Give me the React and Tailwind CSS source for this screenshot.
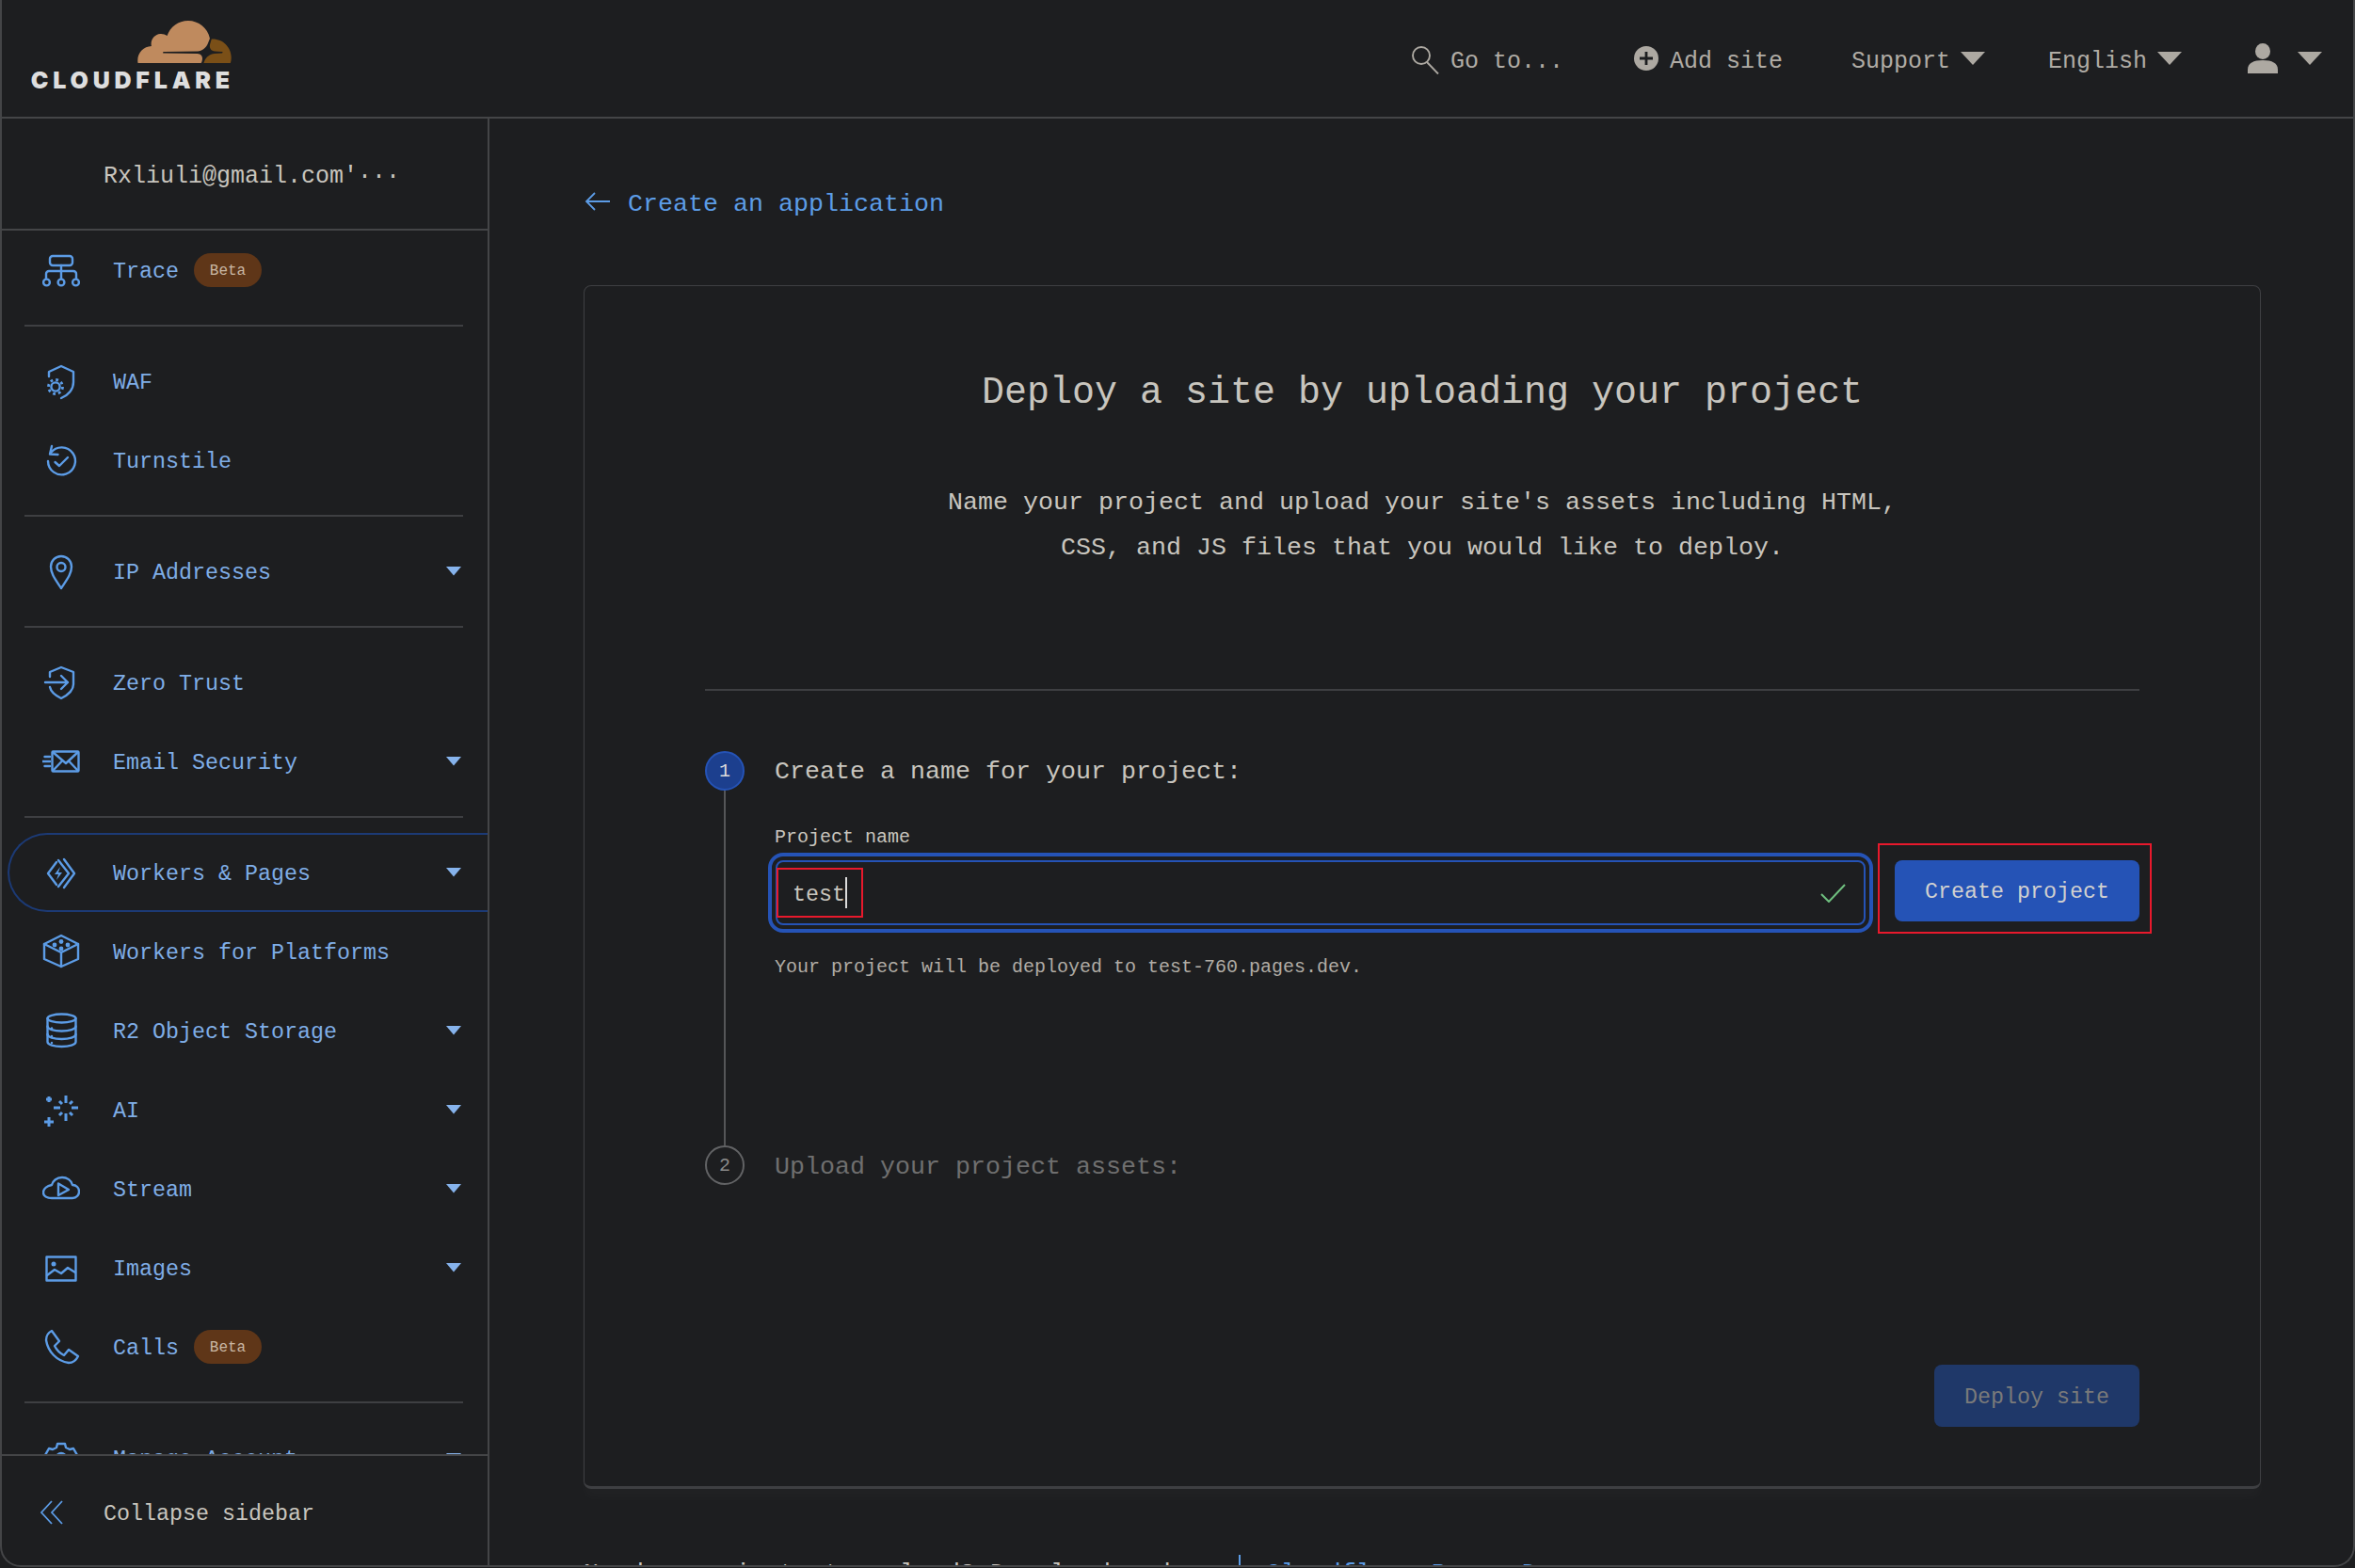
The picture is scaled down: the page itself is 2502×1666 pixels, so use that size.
import React from "react";

const S = ({ children, size = 40 }) => (
  <svg width={size} height={size} viewBox="0 0 40 40" fill="none" stroke="#5c9ce6" strokeWidth="2.4" strokeLinecap="round" strokeLinejoin="round" className="flex-none">
    {children}
  </svg>
);

const Trace = () => (
  <S>
    <rect x="8" y="5" width="24" height="10" rx="3" />
    <path d="M20 15v14M4 29v-5a3 3 0 0 1 3-3h26a3 3 0 0 1 3 3v5" />
    <circle cx="4.5" cy="33" r="3.4" />
    <circle cx="20" cy="33" r="3.4" />
    <circle cx="35.5" cy="33" r="3.4" />
  </S>
);
const Waf = () => (
  <S>
    <path d="M7 15V10L20 4l13 6v11c0 8-6 14-13 17" />
    <circle cx="14" cy="26" r="4.600" />
    <circle cx="14" cy="26" r="7.500" strokeWidth="2.800" strokeDasharray="2.800 3.090" strokeLinecap="butt" />
  </S>
);
const Turnstile = () => (
  <S>
    <path d="M9 12a14.5 14.5 0 1 1-3 9" />
    <path d="M10 5 8 13.5l8.500 .5" />
    <path d="m13.500 22 4.500 4 9-9" />
  </S>
);
const Pin = () => (
  <S>
    <path d="M20 38C14 29 9 23 9 15a11 11 0 0 1 22 0c0 8-5 14-11 23Z" />
    <circle cx="20" cy="15.500" r="4.500" />
  </S>
);
const ZeroTrust = () => (
  <S>
    <path d="M8 14V9l12-5 13 5v13c0 7-7 12-13 15-5-2.500-11-7-12-12" />
    <path d="M3 20h24M20 13l7 7-7 7" />
  </S>
);
const Email = () => (
  <S>
    <rect x="10.500" y="9.500" width="28" height="21" rx="1" />
    <path d="m11 10 14 12 13-12M11 30l9.500-10M38 30l-9.500-10" />
    <path d="M2.500 15H8M.500 20H8M2.500 25H8" />
  </S>
);
const Workers = () => (
  <S>
    <path d="M15 9 6 21l9 12" />
    <path d="m17 7 11 14-11 14" />
    <path d="m23 6 11 15-11 15" />
    <path d="M19 14l-6 8h4l-2 6 6-8h-4Z" fill="#5c9ce6" stroke="none" />
  </S>
);
const Platforms = () => (
  <S>
    <path d="m20 3 18 9v16l-18 8-18-8V12Z" />
    <path d="m2 12 18 9 18-9M20 21v15" />
    <g fill="#5c9ce6" stroke="none">
      <circle cx="13" cy="13" r="2.400" />
      <circle cx="20" cy="9.500" r="2.400" />
      <circle cx="27" cy="13" r="2.400" />
      <circle cx="20" cy="17" r="2.400" />
    </g>
  </S>
);
const R2 = () => (
  <S>
    <ellipse cx="20.500" cy="7" rx="15" ry="4.500" />
    <path d="M5.500 7v25c0 3 7 5 15 5s15-2 15-5V7" />
    <path d="M5.500 15.500c0 3 7 5 15 5s15-2 15-5M5.500 24c0 3 7 5 15 5s15-2 15-5" />
    <g fill="#5c9ce6" stroke="none">
      <circle cx="10" cy="17.500" r="1.200" />
      <circle cx="10" cy="26" r="1.200" />
      <circle cx="10" cy="33" r="1.200" />
    </g>
  </S>
);
const Ai = () => (
  <S>
    <g strokeWidth="3" strokeLinecap="butt">
      <path d="M25 5v8M25 24v8M12 18h7M31 18h7M18 11l3 3M32 11l-3 3M18 26l3-3M32 26l-3-3" />
      <path d="M4 9h6M7 6v6M2 33h10M7 28v10" />
    </g>
  </S>
);
const Stream = () => (
  <S>
    <path d="M10 30h22c4.500 0 7-3.500 7-7 0-4-3-7-7-7-1-5-6-8-11-8-6 0-10 4-11 8-5 1-9 4-9 8s4 6 9 6Z" />
    <path d="M17 14.500 28 21l-11 6Z" />
  </S>
);
const Images = () => (
  <S>
    <rect x="4.500" y="8.500" width="31" height="25" />
    <circle cx="12" cy="16" r="2.500" fill="#5c9ce6" stroke="none" />
    <path d="m5 28 8-6 7 4 7-6 8 5" />
  </S>
);
const Calls = () => (
  <S>
    <path d="m10 3 8 11-5 5c2 4 6 8 10 10l5-6 10 7c-2 4-6 7-10 7C15 35 6 25 4 13c0-4 2-8 6-10Z" />
  </S>
);
const Gear = () => (
  <S>
    <path d="M16 5h8l1 4 4 2 4-1 4 7-3 3v4l3 3-4 7-4-1-4 2-1 4h-8l-1-4-4-2-4 1-4-7 3-3v-4l-3-3 4-7 4 1 4-2Z" />
    <circle cx="20" cy="20" r="5" />
  </S>
);

const Caret = () => (
  <svg width="16" height="10" viewBox="0 0 16 10" className="flex-none">
    <path d="M0 0h16L8 9.500Z" fill="#86b3ec" />
  </svg>
);
const HeadCaret = () => (
  <svg width="26" height="14" viewBox="0 0 26 14" className="block flex-none">
    <path d="M0 0h26L13 14Z" fill="#ada9a2" />
  </svg>
);

const Beta = () => (
  <span className="ml-[16px] flex h-[36px] w-[72px] items-center justify-center rounded-full bg-[#5f3618] pt-[2px] text-[16px] text-[#c9b7a3]">
    Beta
  </span>
);

const Row = ({ icon: I, label, caret, beta, active }) => (
  <div
    className={
      "ml-[6px] flex h-[84px] flex-none items-center rounded-l-full border-2 border-r-0 pl-[35px] pr-[28px] " +
      (active ? "border-[#1c3a75]" : "border-transparent")
    }
  >
    <I />
    <span className="ml-[35px] pt-[5px] text-[23.33px] text-[#7fade6]">{label}</span>
    {beta && <Beta />}
    {caret && (
      <span className="ml-auto">
        <Caret />
      </span>
    )}
  </div>
);

const Divider = () => <div className="my-[16px] ml-[24px] h-[2px] w-[466px] flex-none bg-[#3e3f42]" />;

export default function App() {
  return (
    <div className="h-[1666px] w-[2502px] overflow-hidden bg-[#1d1e20] [font-family:'Liberation_Mono',monospace]">
      <div className="flex h-[1665px] flex-col overflow-hidden rounded-b-[22px] border-x-2 border-b-2 border-[#444547]">
        <header className="flex h-[126px] flex-none items-start border-b-2 border-[#444547] pl-[32px] pr-[33px]">
          <div className="mt-[22px] flex w-[212px] flex-col items-end">
            <svg width="100" height="45" viewBox="0 6.570 24 10.860" className="block">
              <path
                fill="#bf8a5e"
                d="M16.5088 16.8447c.1475-.5068.0908-.9707-.1553-1.3154-.2246-.3164-.6045-.499-1.0615-.5205l-8.6592-.1123a.1559.1559 0 0 1-.1333-.0713c-.0283-.042-.0351-.0986-.021-.1553.0278-.084.1123-.1484.2036-.1562l8.7359-.1123c1.0351-.0489 2.1601-.8868 2.5537-1.9136l.499-1.3013c.0215-.0561.0293-.1128.0147-.168-.5625-2.5463-2.835-4.4453-5.5499-4.4453-2.5039 0-4.6284 1.6177-5.3876 3.8614-.4927-.3658-1.1187-.5625-1.794-.499-1.2026.119-2.1665 1.083-2.2861 2.2856-.0283.31-.0069.6128.0635.894C1.5683 13.171 0 14.7754 0 16.752c0 .1748.0142.3515.0352.5273.0141.083.0844.1475.1689.1475h15.9814c.0909 0 .1758-.0645.2032-.1553l.12-.4268z"
              />
              <path
                fill="#7a4f17"
                d="M19.2656 11.2813c-.0771 0-.1611 0-.2383.0112-.0566 0-.1054.0415-.127.0976l-.3378 1.1744c-.1475.5068-.0918.9707.1543 1.3164.2256.3164.6055.498 1.0625.5195l1.8437.1133c.0557 0 .1055.0263.1329.0703.0283.043.0351.1074.0214.1562-.0283.084-.1132.1485-.204.1553l-1.921.1123c-1.041.0488-2.1582.8867-2.5527 1.914l-.1406.3585c-.0283.0713.0215.1416.0986.1416h6.5977c.0771 0 .1474-.0489.169-.126.1122-.4082.1757-.837.1757-1.2803 0-2.6025-2.125-4.727-4.7344-4.727"
              />
            </svg>
            <span className="-mr-[3px] mt-[9px] h-[18px] text-[25px] font-black leading-[18px] tracking-[4.8px] text-[#dedede] [font-family:Inter,sans-serif]">
              CLOUDFLARE
            </span>
          </div>
          <nav className="ml-auto flex h-[124px] items-center text-[25px] leading-[30px] text-[#b0aca5]">
            <svg width="30" height="30" viewBox="0 0 30 30" fill="none" stroke="#ada9a2" strokeWidth="1.900" className="mt-[4px] flex-none">
              <circle cx="11" cy="10" r="9" />
              <path d="m17 17 12 12.500" />
            </svg>
            <span className="ml-[12px] pt-[7px]">Go to...</span>
            <svg width="26" height="26" viewBox="0 0 26 26" className="ml-[75px] flex-none">
              <circle cx="13" cy="13" r="13" fill="#ada9a2" />
              <path d="M13 6v14M6 13h14" stroke="#1d1e20" strokeWidth="2.800" />
            </svg>
            <span className="ml-[12px] pt-[7px]">Add site</span>
            <span className="ml-[73px] pt-[7px]">Support</span>
            <span className="ml-[11px] -mt-[1px]">
              <HeadCaret />
            </span>
            <span className="ml-[67px] pt-[7px]">English</span>
            <span className="ml-[11px] -mt-[1px]">
              <HeadCaret />
            </span>
            <svg width="32" height="32" viewBox="0 0 32 32" className="ml-[70px] flex-none">
              <ellipse cx="16" cy="8.500" rx="8" ry="8.500" fill="#ada9a2" />
              <path d="M0 32v-4c0-7 6-10 16-10s16 3 16 10v4Z" fill="#ada9a2" />
            </svg>
            <span className="ml-[21px] -mt-[1px]">
              <HeadCaret />
            </span>
          </nav>
        </header>

        <div className="flex min-h-0 flex-1">
          <aside className="flex w-[518px] flex-none flex-col border-r-2 border-[#444547]">
            <div className="flex h-[119px] flex-none items-center border-b-2 border-[#444547] pl-[108px] pt-[6px] text-[25px] text-[#c8c5be]">
              Rxliuli@gmail.com'···
            </div>
            <div className="flex min-h-0 flex-1 flex-col overflow-hidden">
              <Row icon={Trace} label="Trace" beta />
              <Divider />
              <Row icon={Waf} label="WAF" />
              <Row icon={Turnstile} label="Turnstile" />
              <Divider />
              <Row icon={Pin} label="IP Addresses" caret />
              <Divider />
              <Row icon={ZeroTrust} label="Zero Trust" />
              <Row icon={Email} label="Email Security" caret />
              <Divider />
              <Row icon={Workers} label="Workers & Pages" caret active />
              <Row icon={Platforms} label="Workers for Platforms" />
              <Row icon={R2} label="R2 Object Storage" caret />
              <Row icon={Ai} label="AI" caret />
              <Row icon={Stream} label="Stream" caret />
              <Row icon={Images} label="Images" caret />
              <Row icon={Calls} label="Calls" beta />
              <Divider />
              <Row icon={Gear} label="Manage Account" caret />
            </div>
            <div className="flex h-[118px] flex-none items-center border-t-2 border-[#444547] pl-[41px] pt-[3px] text-[23.33px] text-[#c8c5be]">
              <svg width="24" height="26" viewBox="0 0 24 26" fill="none" stroke="#5c9ce6" strokeWidth="1.800" className="flex-none">
                <path d="M12 1 1 13l11 12M23 1 12 13l11 12" />
              </svg>
              <span className="ml-[43px] pt-[6px]">Collapse sidebar</span>
            </div>
          </aside>

          <main className="min-w-0 flex-1 overflow-hidden pl-[100px] pt-[64px] text-[#c8c5be]">
            <div className="flex h-[48px] items-center text-[26.67px] text-[#5c9ce6]">
              <svg width="28" height="22" viewBox="0 0 28 22" fill="none" stroke="#5c9ce6" strokeWidth="1.800" className="ml-[1px] flex-none">
                <path d="M27 11H2M11 2l-9 9 9 9" />
              </svg>
              <span className="ml-[18px] pt-[5px]">Create an application</span>
            </div>

            <section className="mt-[65px] flex w-[1782px] flex-col rounded-[8px] border border-b-[3px] border-[#3e3f42] px-[128px] pb-[63px] pt-[81px] shadow-[0_10px_12px_rgba(255,255,255,0.02)]">
              <h1 className="h-[60px] text-center text-[40px] font-normal leading-[66px] text-[#c8c5be]">
                Deploy a site by uploading your project
              </h1>
              <p className="mt-[63px] h-[96px] pt-[2px] text-center text-[26.67px] leading-[48px]">
                Name your project and upload your site's assets including HTML,
                <br />
                CSS, and JS files that you would like to deploy.
              </p>
              <div className="mt-[128px] h-[2px] bg-[#3e3f42]" />

              <div className="mt-[61px] flex h-[419px]">
                <div className="-mb-[3px] flex w-[42px] flex-none flex-col items-center pt-[3px]">
                  <div className="flex h-[42px] w-[42px] flex-none items-center justify-center rounded-full border-2 border-[#2553b6] bg-[#1c3f8e] pt-[2px] text-[20px] text-[#dcdcdc]">
                    1
                  </div>
                  <div className="w-[2px] flex-1 bg-[#555658]" />
                </div>
                <div className="ml-[32px] min-w-0 flex-1">
                  <div className="h-[48px] text-[26.67px] leading-[51px]">Create a name for your project:</div>
                  <div className="mt-[30px] h-[30px] text-[20px] leading-[34px]">Project name</div>
                  <div className="-ml-[7px] mt-[3px] flex items-start">
                    <div className="h-[85px] w-[1174px] flex-none rounded-[16px] border-4 border-[#2553b6] p-[4px]">
                      <div className="relative flex h-[69px] items-center rounded-[8px] border-2 border-[#2553b6] pl-[16px] pr-[19px] text-[23.33px]">
                        <span className="pt-[5px]">test</span>
                        <span className="h-[33px] w-[2px] bg-[#dcdcdc]" />
                        <svg width="27" height="20" viewBox="0 0 27 20" fill="none" stroke="#6fbf7f" strokeWidth="2" className="ml-auto flex-none">
                          <path d="m1 11 8 8L26 1" />
                        </svg>
                        <div className="absolute -left-[1px] top-[6px] h-[53px] w-[92px] border-2 border-[#e8192c]" />
                      </div>
                    </div>
                    <div className="-mt-[10px] ml-[5px] h-[96px] w-[291px] flex-none border-2 border-[#e8192c] pl-[16px] pt-[16px]">
                      <button className="h-[65px] w-[260px] rounded-[8px] bg-[#2553b6] pt-[4px] text-[23.33px] text-[#d0d0d0]">
                        Create project
                      </button>
                    </div>
                  </div>
                  <div className="mt-[19px] h-[30px] text-[20px] leading-[34px] text-[#b0aca5]">
                    Your project will be deployed to test-760.pages.dev.
                  </div>
                </div>
              </div>

              <div className="flex h-[48px]">
                <div className="flex h-[48px] w-[42px] flex-none items-center">
                  <div className="flex h-[42px] w-[42px] items-center justify-center rounded-full border-2 border-[#626365] pt-[2px] text-[20px] text-[#8a8a8a]">
                    2
                  </div>
                </div>
                <div className="ml-[32px] h-[48px] text-[26.67px] leading-[52px] text-[#6f6f6f]">Upload your project assets:</div>
              </div>

              <button className="mt-[188px] h-[66px] w-[218px] self-end rounded-[8px] bg-[#1f3869] pt-[4px] text-[23.33px] text-[#7a7a7a]">
                Deploy site
              </button>
            </section>

            <div className="mt-[64px] flex h-[48px] items-center whitespace-pre text-[26.67px] text-[#c8c5be]">
              <span className="pt-[4px]">Need a project  to upload? Download a demo</span>
              <span className="ml-[24px] mt-[4px] h-[40px] w-[2px] bg-[#5c9ce6]" />
              <span className="ml-[27px] pt-[4px] text-[#5c9ce6]">Cloudflare Pages Docs</span>
            </div>
          </main>
        </div>
      </div>
    </div>
  );
}
